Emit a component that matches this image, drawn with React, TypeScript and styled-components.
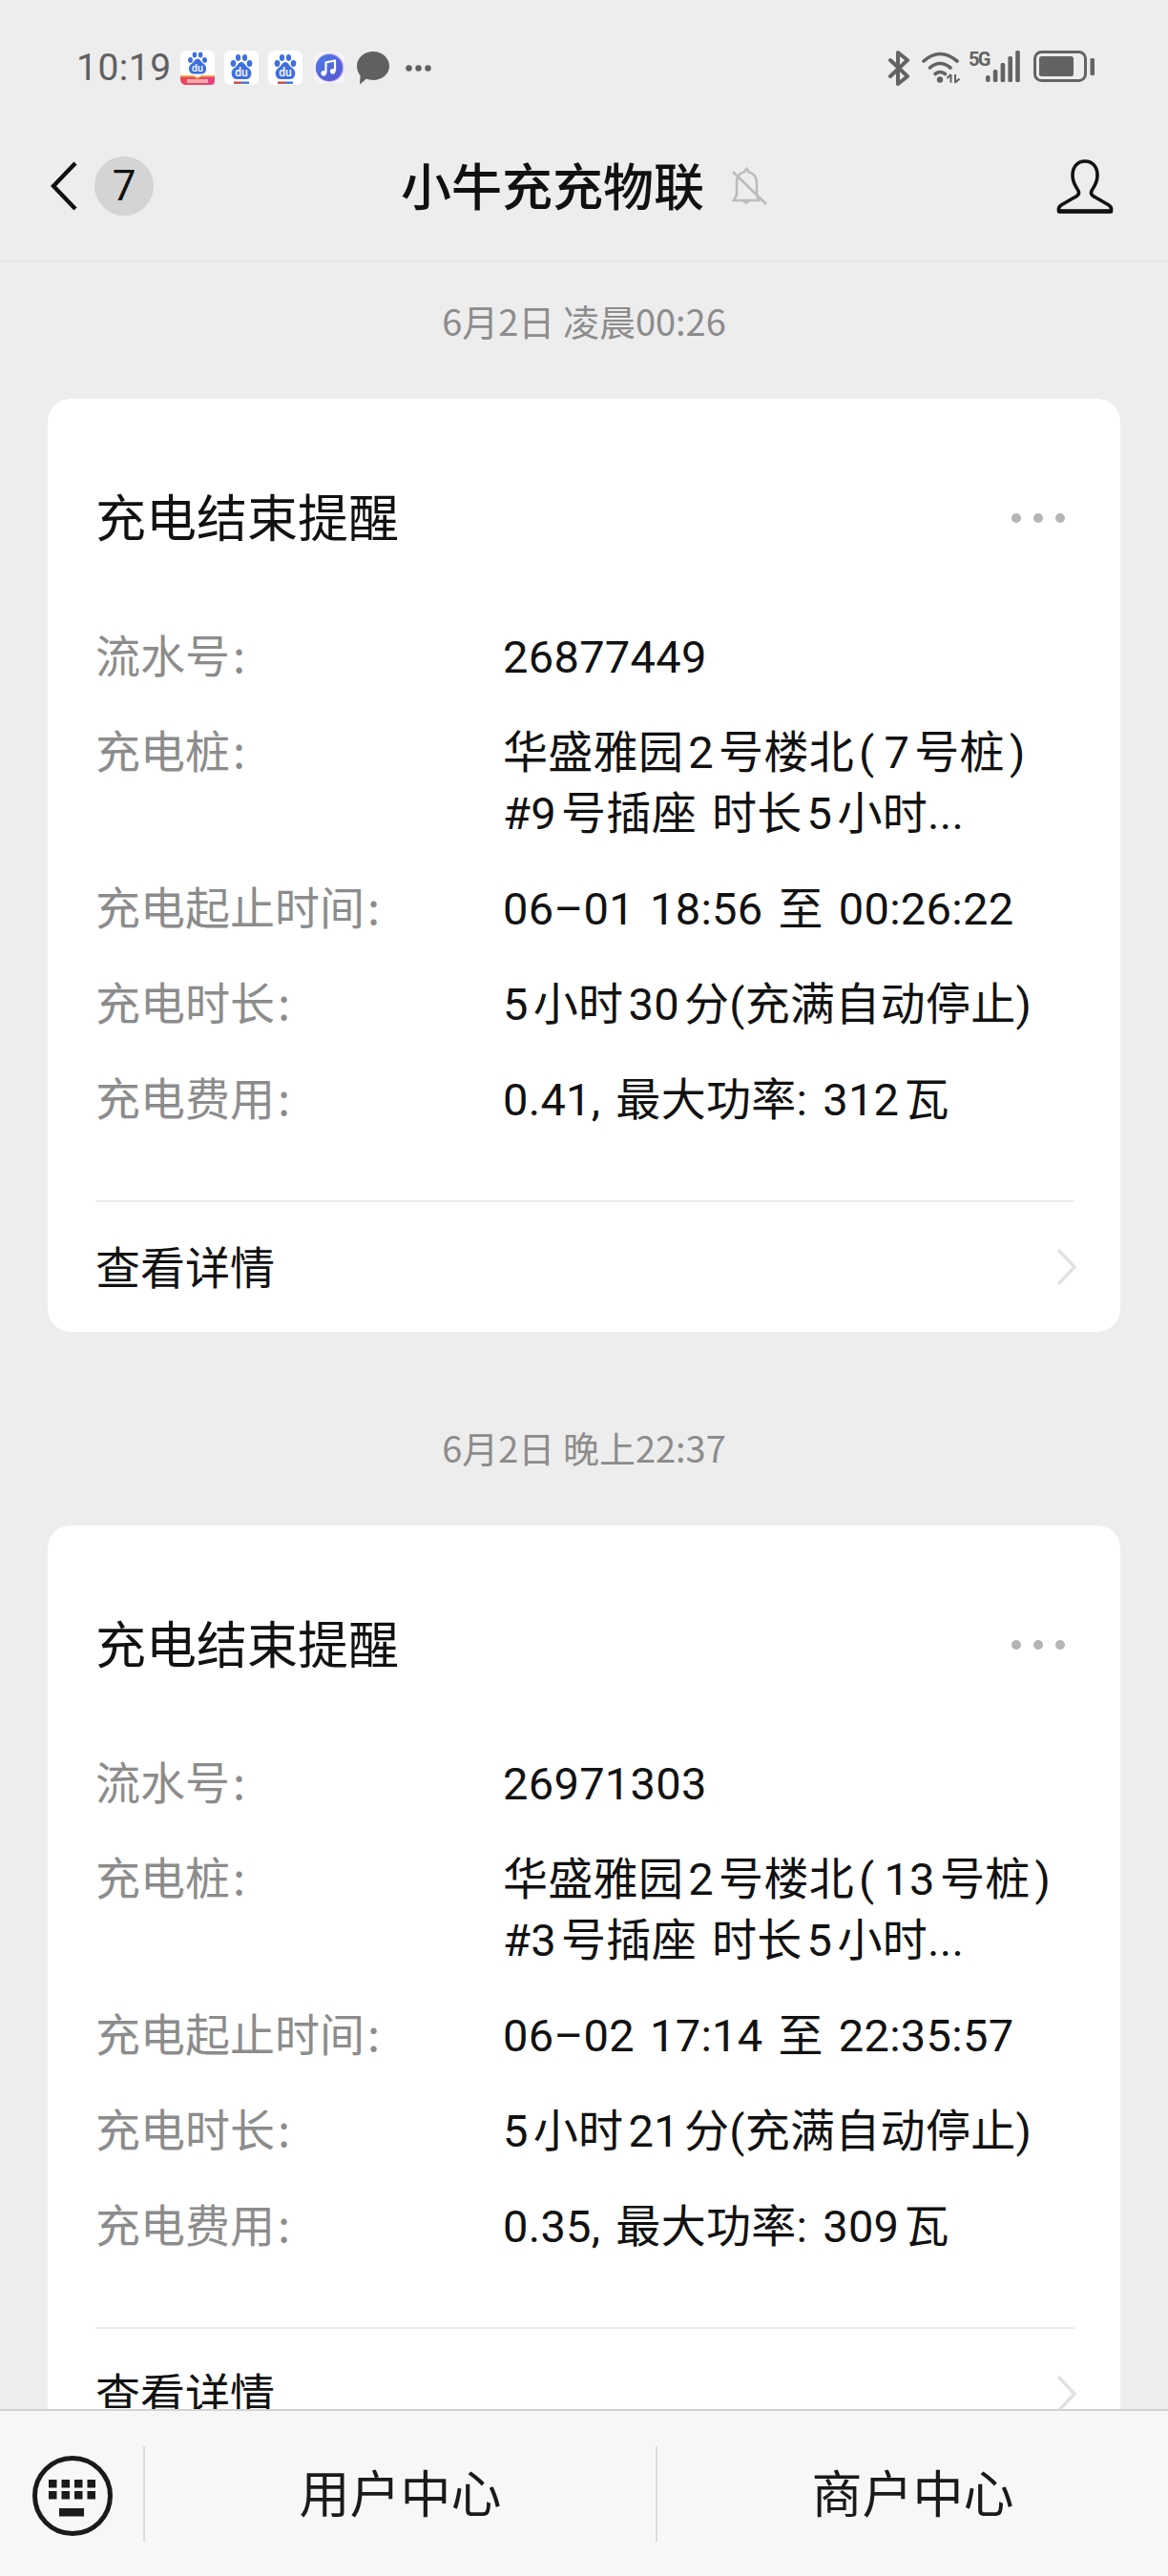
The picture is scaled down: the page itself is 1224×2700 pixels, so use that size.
import React from 'react'
import styled, { createGlobalStyle } from 'styled-components'

const GlobalStyle = createGlobalStyle`
  html, body {
    margin: 0;
    padding: 0;
    background: #ededed;
  }
  * {
    box-sizing: border-box;
  }
`

const Screen = styled.div`
  width: 1224px;
  height: 2700px;
  display: flex;
  flex-direction: column;
  overflow: hidden;
  background: #ededed;
  color: #111;
  font-family: "Noto Sans CJK SC", "Noto Sans", sans-serif;
`

const StatusBar = styled.div`
  height: 100px;
  flex: none;
  display: flex;
  align-items: flex-start;
  padding: 53px 77px 0 80px;
`

const Clock = styled.span`
  width: 96px;
  height: 36px;
  font-family: Roboto, sans-serif;
  font-size: 39px;
  line-height: 36px;
  letter-spacing: 0.5px;
  color: #606060;
  white-space: nowrap;
`

const NoticeIcons = styled.div`
  display: flex;
  align-items: center;
  height: 36px;
  margin-left: 13px;
  gap: 10px;
`

const SystemIcons = styled.div`
  display: flex;
  align-items: flex-start;
  margin-left: auto;
`

const StatusSvg = styled.svg<{ $left?: number }>`
  display: block;
  flex: none;
  margin-left: ${props => props.$left ?? 0}px;
`

const NetworkLabel = styled.span`
  width: 18px;
  margin-left: 9px;
  font-family: Roboto, sans-serif;
  font-size: 20px;
  line-height: 18px;
  font-weight: 700;
  letter-spacing: -1.6px;
  color: #636363;
`

const NavBar = styled.header`
  height: 175px;
  flex: none;
  display: flex;
  align-items: center;
  padding: 17px 57px 0 53px;
  border-bottom: 2px solid #e6e6e6;
`

const BackGroup = styled.div`
  display: flex;
  align-items: center;
  gap: 18px;
`

const UnreadBadge = styled.span`
  width: 62px;
  height: 62px;
  display: flex;
  align-items: center;
  justify-content: center;
  border-radius: 50%;
  background: #d4d4d4;
  font-family: Roboto, sans-serif;
  font-size: 44px;
  color: #111;
`

const NavTitle = styled.h1`
  margin: 0 28px 0 259px;
  padding-bottom: 4px;
  font-size: 53px;
  line-height: 64px;
  font-weight: 500;
  white-space: nowrap;
`

const ProfileButton = styled.div`
  margin-left: auto;
  display: flex;
`

const MessageList = styled.main`
  flex: 1;
  min-height: 0;
  overflow: hidden;
  padding: 36px 50px 0;
`

const DateLabel = styled.div`
  height: 50px;
  text-align: center;
  font-size: 38px;
  line-height: 50px;
  color: #8c8c8c;
  margin-bottom: 57px;
`

const Card = styled.article`
  height: 978px;
  background: #fff;
  border-radius: 24px;
  padding: 92px 48px 0 50px;
  margin-bottom: 96px;
`

const CardHeader = styled.div`
  display: flex;
  align-items: center;
  justify-content: space-between;
  margin-bottom: 87px;
`

const CardTitle = styled.h2`
  margin: 0;
  font-size: 53px;
  line-height: 60px;
  font-weight: 400;
`

const MoreDots = styled.div`
  display: flex;
  gap: 13px;
  margin-right: 10px;
  padding-top: 5px;
`

const Dot = styled.span`
  width: 10px;
  height: 10px;
  border-radius: 50%;
  background: #b4b4b4;
`

const Fields = styled.dl`
  margin: 0 0 73px;
  display: grid;
  grid-template-columns: 427px 1fr;
  row-gap: 36px;
  font-size: 47px;
  line-height: 64px;
  height: 528px;
`

const FieldLabel = styled.dt`
  color: #8c8c8c;
  line-height: 56px;
  white-space: nowrap;
`

const FieldValue = styled.dd`
  margin: 0;
  color: #111;
  white-space: nowrap;
  font-family: Roboto, "Noto Sans CJK SC", sans-serif;
  letter-spacing: 0.3px;
  word-spacing: 4px;
`

const DetailRow = styled.div`
  height: 138px;
  display: flex;
  align-items: center;
  justify-content: space-between;
  border-top: 2px solid #ececec;
  font-size: 47px;
  color: #111;
`

const DetailLabel = styled.span`
  padding-bottom: 6px;
`

const DetailArrow = styled.span`
  display: flex;
  margin-right: -3px;
`

const BottomMenu = styled.footer`
  height: 175px;
  flex: none;
  display: flex;
  align-items: center;
  background: #f7f7f7;
  border-top: 2px solid #d2d2d2;
`

const KeyboardCell = styled.div`
  width: 150px;
  flex: none;
  display: flex;
  padding-left: 34px;
  padding-top: 4px;
`

const MenuDivider = styled.span`
  width: 2px;
  height: 100px;
  flex: none;
  background: #dcdcdc;
`

const MenuItem = styled.div`
  flex: 1;
  padding-bottom: 6px;
  text-align: center;
  font-size: 53px;
  line-height: 64px;
  color: #1a1a1a;
`

const BaiduIcon = ({ promo }: { promo?: boolean }) => (
  <svg width="36" height="36" viewBox="0 0 36 36">
    <rect width="36" height="36" rx="6" fill="#fff" />
    <g fill="#3e6fe0" transform={promo ? 'translate(2.2 -2) scale(0.88)' : undefined}>
      <ellipse cx="9.5" cy="13.5" rx="2.8" ry="3.4" />
      <ellipse cx="14.5" cy="7.5" rx="2.6" ry="3.4" />
      <ellipse cx="21.5" cy="7.5" rx="2.6" ry="3.4" />
      <ellipse cx="26.5" cy="13.5" rx="2.8" ry="3.4" />
      <path d="M18 12 C15 12 14 16 11 18 C8 20 7 23 8 26 C9 29 11 30 13 30 H23 C25 30 27 29 28 26 C29 23 28 20 25 18 C22 16 21 12 18 12Z" />
      <text x="18" y="27" textAnchor="middle" fontFamily="Roboto, sans-serif" fontSize="12" fontWeight="500" fill="#fff">du</text>
    </g>
    {promo ? (
      <>
        <path d="M0 27 H14 L18 29 L22 27 H36 V30 C36 34 33 36 30 36 H6 C3 36 0 34 0 30Z" fill="#e8485f" />
        <path d="M0 26 H14 L18 28 L22 26 H36 V27.5 H22 L18 29.5 L14 27.5 H0Z" fill="#f5b53f" />
        <rect x="24" y="28" width="12" height="8" rx="3" fill="#e8408c" opacity="0.7" />
        <rect x="7" y="30" width="22" height="4" fill="#f7c9c9" opacity="0.75" />
      </>
    ) : (
      <>
        <rect x="10" y="32.5" width="8" height="2.4" fill="#c9483f" />
        <rect x="18" y="32.5" width="8" height="2.4" fill="#4172dc" />
      </>
    )}
  </svg>
)

const MusicIcon = () => (
  <StatusSvg width="32" height="32" viewBox="0 0 32 32" $left={2}>
    <defs>
      <linearGradient id="musicFill" x1="0" y1="0" x2="1" y2="1">
        <stop offset="0" stopColor="#4a7be6" />
        <stop offset="1" stopColor="#5b55cf" />
      </linearGradient>
    </defs>
    <rect width="32" height="32" rx="5" fill="#f7f2fa" />
    <circle cx="16.5" cy="16" r="15" fill="#c8b4f2" />
    <circle cx="16" cy="16" r="14" fill="url(#musicFill)" />
    <path d="M12.5 21.5 V10.5 L22 8.5 V19.5" fill="none" stroke="#fff" strokeWidth="2.2" />
    <circle cx="10.2" cy="21.8" r="2.8" fill="#fff" />
    <circle cx="19.7" cy="19.8" r="2.8" fill="#fff" />
  </StatusSvg>
)

const BubbleIcon = () => (
  <StatusSvg width="34" height="35" viewBox="0 0 34 35" $left={3}>
    <path d="M17 0 C26.5 0 34 6.8 34 15 C34 23.6 26.5 30 17 30 C14.6 30 12 29.6 10 28.6 L3 34.5 L3.6 25.2 C1.2 22.4 0 19 0 15 C0 6.8 7.5 0 17 0Z" fill="#606060" />
  </StatusSvg>
)

const MoreNotices = () => (
  <StatusSvg width="27" height="7" viewBox="0 0 27 7" $left={7}>
    <g fill="#606060">
      <circle cx="3.5" cy="3.5" r="3.2" />
      <circle cx="13.5" cy="3.5" r="3.2" />
      <circle cx="23.5" cy="3.5" r="3.2" />
    </g>
  </StatusSvg>
)

const BluetoothIcon = () => (
  <StatusSvg width="24" height="37" viewBox="0 0 24 37">
    <path d="M3 10 L21 27 L11 35 V2 L21 10 L3 27" fill="none" stroke="#636363" strokeWidth="4" strokeLinejoin="round" strokeLinecap="round" />
  </StatusSvg>
)

const WifiIcon = () => (
  <StatusSvg width="40" height="34" viewBox="0 0 40 34" $left={12}>
    <g fill="none" stroke="#636363" strokeWidth="3.6" strokeLinecap="round">
      <path d="M2 11 Q19 -4 37 11" />
      <path d="M8.5 18 Q19 9 30 18" />
      <path d="M14 24.5 Q19 20.5 24.5 24.5" />
    </g>
    <circle cx="19" cy="30.5" r="3.2" fill="#636363" />
    <path d="M30.5 33.5 V25 M26.5 29 L30.5 25 M35 25 V33.5 L39.5 29.5" fill="none" stroke="#636363" strokeWidth="2" />
  </StatusSvg>
)

const SignalIcon = () => (
  <StatusSvg width="36" height="33" viewBox="0 0 36 33">
    <g fill="#636363">
      <rect x="0" y="26" width="4.6" height="7" rx="2" />
      <rect x="7.8" y="20" width="4.6" height="13" rx="1.5" />
      <rect x="15.6" y="13" width="4.6" height="20" rx="1.5" />
      <rect x="23.4" y="6" width="4.6" height="27" rx="1.5" />
      <rect x="31.2" y="0" width="4.6" height="33" rx="1.5" />
    </g>
  </StatusSvg>
)

const BatteryIcon = () => (
  <StatusSvg width="64" height="33" viewBox="0 0 64 33" $left={14}>
    <rect x="1.5" y="1.5" width="53" height="30" rx="7" fill="none" stroke="#636363" strokeWidth="3" />
    <rect x="6" y="6" width="36" height="21" rx="2.5" fill="#636363" />
    <rect x="59.5" y="8" width="4.5" height="18" rx="1.5" fill="#636363" />
  </StatusSvg>
)

const BackIcon = () => (
  <svg width="28" height="52" viewBox="0 0 28 52">
    <path d="M26 2 L3 26 L26 50" fill="none" stroke="#111" strokeWidth="4.4" />
  </svg>
)

const MutedBell = () => (
  <svg width="38" height="40" viewBox="0 0 38 40">
    <g fill="none" stroke="#bcbcbc" strokeWidth="2.6">
      <path d="M3 35 H29 L27 29 V16 C27 10 23 6 19 5.5 L16.5 2 L13.5 5.5 C9 6.5 6 10 6 16 V29Z" />
      <path d="M13 35 Q16 40 19 35" />
      <path d="M2 5 L37 39" />
    </g>
  </svg>
)

const ProfileIcon = () => (
  <svg width="60" height="57" viewBox="0 0 60 57">
    <path
      d="M30 2 C21 2 17 9 17 17 C17 25 21 29 23 33 C25 37 21 39 17 41 L5 48 C2 50 1.5 54 4 54.5 H56 C58.5 54 58 50 55 48 L43 41 C39 39 35 37 37 33 C39 29 43 25 43 17 C43 9 39 2 30 2Z"
      fill="none"
      stroke="#111"
      strokeWidth="3.6"
      strokeLinejoin="round"
    />
    <path d="M3 54.5 H57" stroke="#111" strokeWidth="4.6" strokeLinecap="round" />
  </svg>
)

const DetailChevron = () => (
  <svg width="22" height="40" viewBox="0 0 22 40">
    <path d="M2 2 L19 20 L2 38" fill="none" stroke="#e2e2e2" strokeWidth="3.6" />
  </svg>
)

const KeyboardIcon = () => (
  <svg width="84" height="84" viewBox="0 0 84 84">
    <circle cx="42" cy="42" r="39.5" fill="none" stroke="#1a1a1a" strokeWidth="5" />
    <g fill="#1a1a1a">
      {[17, 30.5, 44, 57.5].map(x => (
        <React.Fragment key={x}>
          <rect x={x} y="25" width="8.5" height="8.5" />
          <rect x={x} y="37" width="8.5" height="8.5" />
        </React.Fragment>
      ))}
      <rect x="28" y="55" width="26" height="8.5" />
    </g>
  </svg>
)

type Message = {
  date: string
  serial: string
  pile: string[]
  period: string
  duration: string
  cost: string
}

const messages: Message[] = [
  {
    date: '6月2日 凌晨00:26',
    serial: '26877449',
    pile: ['华盛雅园\u200a2\u200a号楼北\u200a(\u20097\u200a号桩\u200a)', '#9\u200a号插座 时长\u200a5\u200a小时...'],
    period: '06–01 18:56 至 00:26:22',
    duration: '5\u200a小时\u200a30\u200a分(充满自动停止)',
    cost: '0.41, 最大功率: 312\u200a瓦',
  },
  {
    date: '6月2日 晚上22:37',
    serial: '26971303',
    pile: ['华盛雅园\u200a2\u200a号楼北\u200a(\u200913\u200a号桩\u200a)', '#3\u200a号插座 时长\u200a5\u200a小时...'],
    period: '06–02 17:14 至 22:35:57',
    duration: '5\u200a小时\u200a21\u200a分(充满自动停止)',
    cost: '0.35, 最大功率: 309\u200a瓦',
  },
]

const MessageCard = ({ message }: { message: Message }) => (
  <>
    <DateLabel>{message.date}</DateLabel>
    <Card>
      <CardHeader>
        <CardTitle>充电结束提醒</CardTitle>
        <MoreDots>
          <Dot />
          <Dot />
          <Dot />
        </MoreDots>
      </CardHeader>
      <Fields>
        <FieldLabel>流水号{'\u200a'}:</FieldLabel>
        <FieldValue>{message.serial}</FieldValue>
        <FieldLabel>充电桩{'\u200a'}:</FieldLabel>
        <FieldValue>
          {message.pile[0]}
          <br />
          {message.pile[1]}
        </FieldValue>
        <FieldLabel>充电起止时间{'\u200a'}:</FieldLabel>
        <FieldValue>{message.period}</FieldValue>
        <FieldLabel>充电时长{'\u200a'}:</FieldLabel>
        <FieldValue>{message.duration}</FieldValue>
        <FieldLabel>充电费用{'\u200a'}:</FieldLabel>
        <FieldValue>{message.cost}</FieldValue>
      </Fields>
      <DetailRow>
        <DetailLabel>查看详情</DetailLabel>
        <DetailArrow>
          <DetailChevron />
        </DetailArrow>
      </DetailRow>
    </Card>
  </>
)

export default function App() {
  return (
    <Screen>
      <GlobalStyle />
      <StatusBar>
        <Clock>10:19</Clock>
        <NoticeIcons>
          <BaiduIcon promo />
          <BaiduIcon />
          <BaiduIcon />
          <MusicIcon />
          <BubbleIcon />
          <MoreNotices />
        </NoticeIcons>
        <SystemIcons>
          <BluetoothIcon />
          <WifiIcon />
          <NetworkLabel>5G</NetworkLabel>
          <SignalIcon />
          <BatteryIcon />
        </SystemIcons>
      </StatusBar>
      <NavBar>
        <BackGroup>
          <BackIcon />
          <UnreadBadge>7</UnreadBadge>
        </BackGroup>
        <NavTitle>小牛充充物联</NavTitle>
        <MutedBell />
        <ProfileButton>
          <ProfileIcon />
        </ProfileButton>
      </NavBar>
      <MessageList>
        {messages.map(message => (
          <MessageCard key={message.serial} message={message} />
        ))}
      </MessageList>
      <BottomMenu>
        <KeyboardCell>
          <KeyboardIcon />
        </KeyboardCell>
        <MenuDivider />
        <MenuItem>用户中心</MenuItem>
        <MenuDivider />
        <MenuItem>商户中心</MenuItem>
      </BottomMenu>
    </Screen>
  )
}
